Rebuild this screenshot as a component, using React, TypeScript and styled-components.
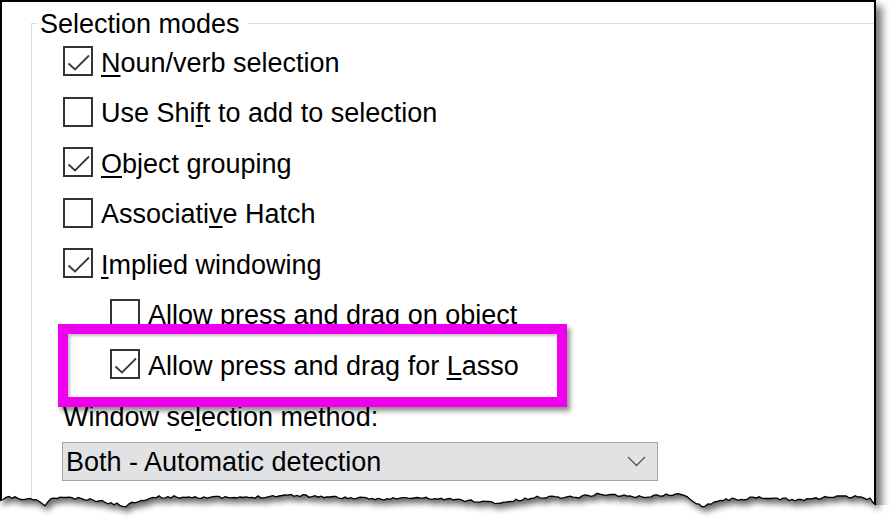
import styled, {createGlobalStyle} from "styled-components";
import {FC, ReactNode} from "react";

const GlobalStyle = createGlobalStyle`
  html, body {
    margin: 0;
    padding: 0;
    background: #ffffff;
  }

  body {
    font-family: "Liberation Sans", Arial, sans-serif;
    color: #000000;
  }
`;

const Page = styled.div`
  position: relative;
  width: 896px;
  height: 531px;
  overflow: hidden;
  background: #ffffff;
`;

const Frame = styled.div`
  box-sizing: border-box;
  width: 876px;
  height: 522px;
  padding-top: 5px;
  border: 2px solid #000000;
  border-bottom: none;
  background: #ffffff;
  box-shadow: 6px 6px 8px rgba(0, 0, 0, 0.55);
  overflow: hidden;
`;

const Group = styled.fieldset`
  margin: 0 -40px 0 29px;
  padding: 0 0 0 5px;
  min-height: 560px;
  min-inline-size: auto;
  border: 1px solid #dcdcdc;
  border-right: none;
  border-bottom: none;
`;

const Legend = styled.legend`
  padding: 2px 8px 0 3px;
  font-size: 27px;
  line-height: 30px;
`;

const Content = styled.div`
  display: flex;
  flex-direction: column;
  padding: 7px 0 0 26px;
`;

const Options = styled.div`
  display: flex;
  flex-direction: column;
  gap: 20.5px;
`;

const Row = styled.div<{ $indent: boolean }>`
  position: relative;
  display: flex;
  align-items: center;
  gap: 8px;
  height: 30px;
  padding-left: ${({$indent}) => ($indent ? 47 : 0)}px;
  font-size: 27px;
  white-space: nowrap;
`;

const Box = styled.span`
  box-sizing: border-box;
  flex: none;
  width: 30px;
  height: 30px;
  border: 2px solid #333333;
  background: #ffffff;

  svg {
    display: block;
  }
`;

const Text = styled.span`
  padding-top: 3px;
  line-height: 30px;
`;

const Mn = styled.span`
  text-decoration: underline;
  text-decoration-thickness: 1.5px;
  text-underline-offset: 3px;
`;

const Highlight = styled.div`
  position: absolute;
  top: -25px;
  left: -5px;
  box-sizing: border-box;
  width: 509px;
  height: 83px;
  border: 10px solid #ee00ee;
  box-shadow: 3px 4px 5px rgba(0, 0, 0, 0.45), inset 2px 2px 3px rgba(0, 0, 0, 0.25);
  pointer-events: none;
`;

const FieldLabel = styled.div`
  margin-top: 22.5px;
  font-size: 27px;
  line-height: 30px;
`;

const Select = styled.div`
  box-sizing: border-box;
  display: flex;
  align-items: center;
  justify-content: space-between;
  width: 596px;
  height: 39px;
  margin: 10.5px 0 0 -1px;
  padding: 2px 11px 0 3px;
  border: 1px solid #9aa6b2;
  background: #e1e2e4;
  font-size: 27px;
  line-height: 35px;

  svg {
    margin-top: -2px;
  }
`;

interface CheckProps {
    checked: boolean;
}

const Check: FC<CheckProps> = ({checked}) => (
    <Box>
        {checked && (
            <svg width="26" height="26" viewBox="0 0 26 26">
                <polyline points="3.5,15.5 10,21.5 24,7.5" fill="none" stroke="#3a3a3a" strokeWidth="1.8"/>
            </svg>
        )}
    </Box>
);

interface OptionProps {
    checked: boolean;
    indent?: boolean;
    children: ReactNode;
    highlight?: boolean;
}

const Option: FC<OptionProps> = ({checked, indent = false, children, highlight}) => (
    <Row $indent={indent}>
        <Check checked={checked}/>
        <Text>{children}</Text>
        {highlight && <Highlight/>}
    </Row>
);

const EdgeSvg = styled.svg`
  position: absolute;
  left: 0;
  top: 480px;
`;

const EDGE_KEYS: [number, number][] = [
    [0, 502], [5, 498], [15, 497], [22, 500], [32, 499], [40, 502], [45, 505], [50, 500],
    [60, 497], [80, 499], [100, 501], [125, 506], [140, 500], [160, 497], [195, 497],
    [240, 498], [290, 495], [330, 497], [370, 499], [420, 498], [460, 500], [500, 503],
    [540, 497], [577, 497], [600, 494], [640, 497], [680, 494], [703, 506], [720, 500],
    [760, 498], [800, 500], [830, 497], [860, 497], [870, 499], [874, 503],
];

const buildEdge = (): [number, number][] => {
    let seed = 11;
    const rand = () => {
        seed = (seed * 16807) % 2147483647;
        return seed / 2147483647;
    };
    const pts: [number, number][] = [];
    for (let x = 0; x <= 874; x += 3) {
        let i = 0;
        while (i < EDGE_KEYS.length - 2 && EDGE_KEYS[i + 1][0] < x) i++;
        const [x0, y0] = EDGE_KEYS[i];
        const [x1, y1] = EDGE_KEYS[i + 1];
        const t = Math.min(1, Math.max(0, (x - x0) / (x1 - x0)));
        const y = y0 + (y1 - y0) * t + (rand() - 0.5) * 2.6;
        pts.push([x, +(y - 480).toFixed(1)]);
    }
    pts.push([876, 25]);
    return pts;
};

const TornEdge: FC = () => {
    const pts = buildEdge();
    const line = pts.map(([x, y], i) => `${i ? "L" : "M"}${x},${y}`).join(" ");
    const below = `${line} L896,25 L896,60 L-2,60 L-2,${pts[0][1]} Z`;
    const above = `${line} L876,-20 L0,-20 Z`;
    return (
        <EdgeSvg width="896" height="51" viewBox="0 0 896 51">
            <defs>
                <filter id="tornBlur" x="-10%" y="-100%" width="120%" height="300%">
                    <feGaussianBlur stdDeviation="3"/>
                </filter>
                <clipPath id="tornBelow">
                    <path d={below}/>
                </clipPath>
            </defs>
            <path d={below} fill="#ffffff"/>
            <g clipPath="url(#tornBelow)">
                <path d={above} fill="#000000" opacity="0.6" transform="translate(3,5)" filter="url(#tornBlur)"/>
            </g>
            <path d={line} fill="none" stroke="#000000" strokeWidth="1.3"/>
        </EdgeSvg>
    );
};

const App = () => {
    return (
        <Page>
            <GlobalStyle/>
            <Frame>
                <Group>
                    <Legend>Selection modes</Legend>
                    <Content>
                        <Options>
                            <Option checked><Mn>N</Mn>oun/verb selection</Option>
                            <Option checked={false}>Use Shi<Mn>f</Mn>t to add to selection</Option>
                            <Option checked><Mn>O</Mn>bject grouping</Option>
                            <Option checked={false}>Associati<Mn>v</Mn>e Hatch</Option>
                            <Option checked><Mn>I</Mn>mplied windowing</Option>
                            <Option checked={false} indent>Allow press and drag on object</Option>
                            <Option checked indent highlight>Allow press and drag for <Mn>L</Mn>asso</Option>
                        </Options>
                        <FieldLabel>Window se<Mn>l</Mn>ection method:</FieldLabel>
                        <Select>
                            <span>Both - Automatic detection</span>
                            <svg width="19" height="11" viewBox="0 0 19 11">
                                <polyline points="1,1 9.5,9.5 18,1" fill="none" stroke="#555555" strokeWidth="1.3"/>
                            </svg>
                        </Select>
                    </Content>
                </Group>
            </Frame>
            <TornEdge/>
        </Page>
    );
};

export default App;
